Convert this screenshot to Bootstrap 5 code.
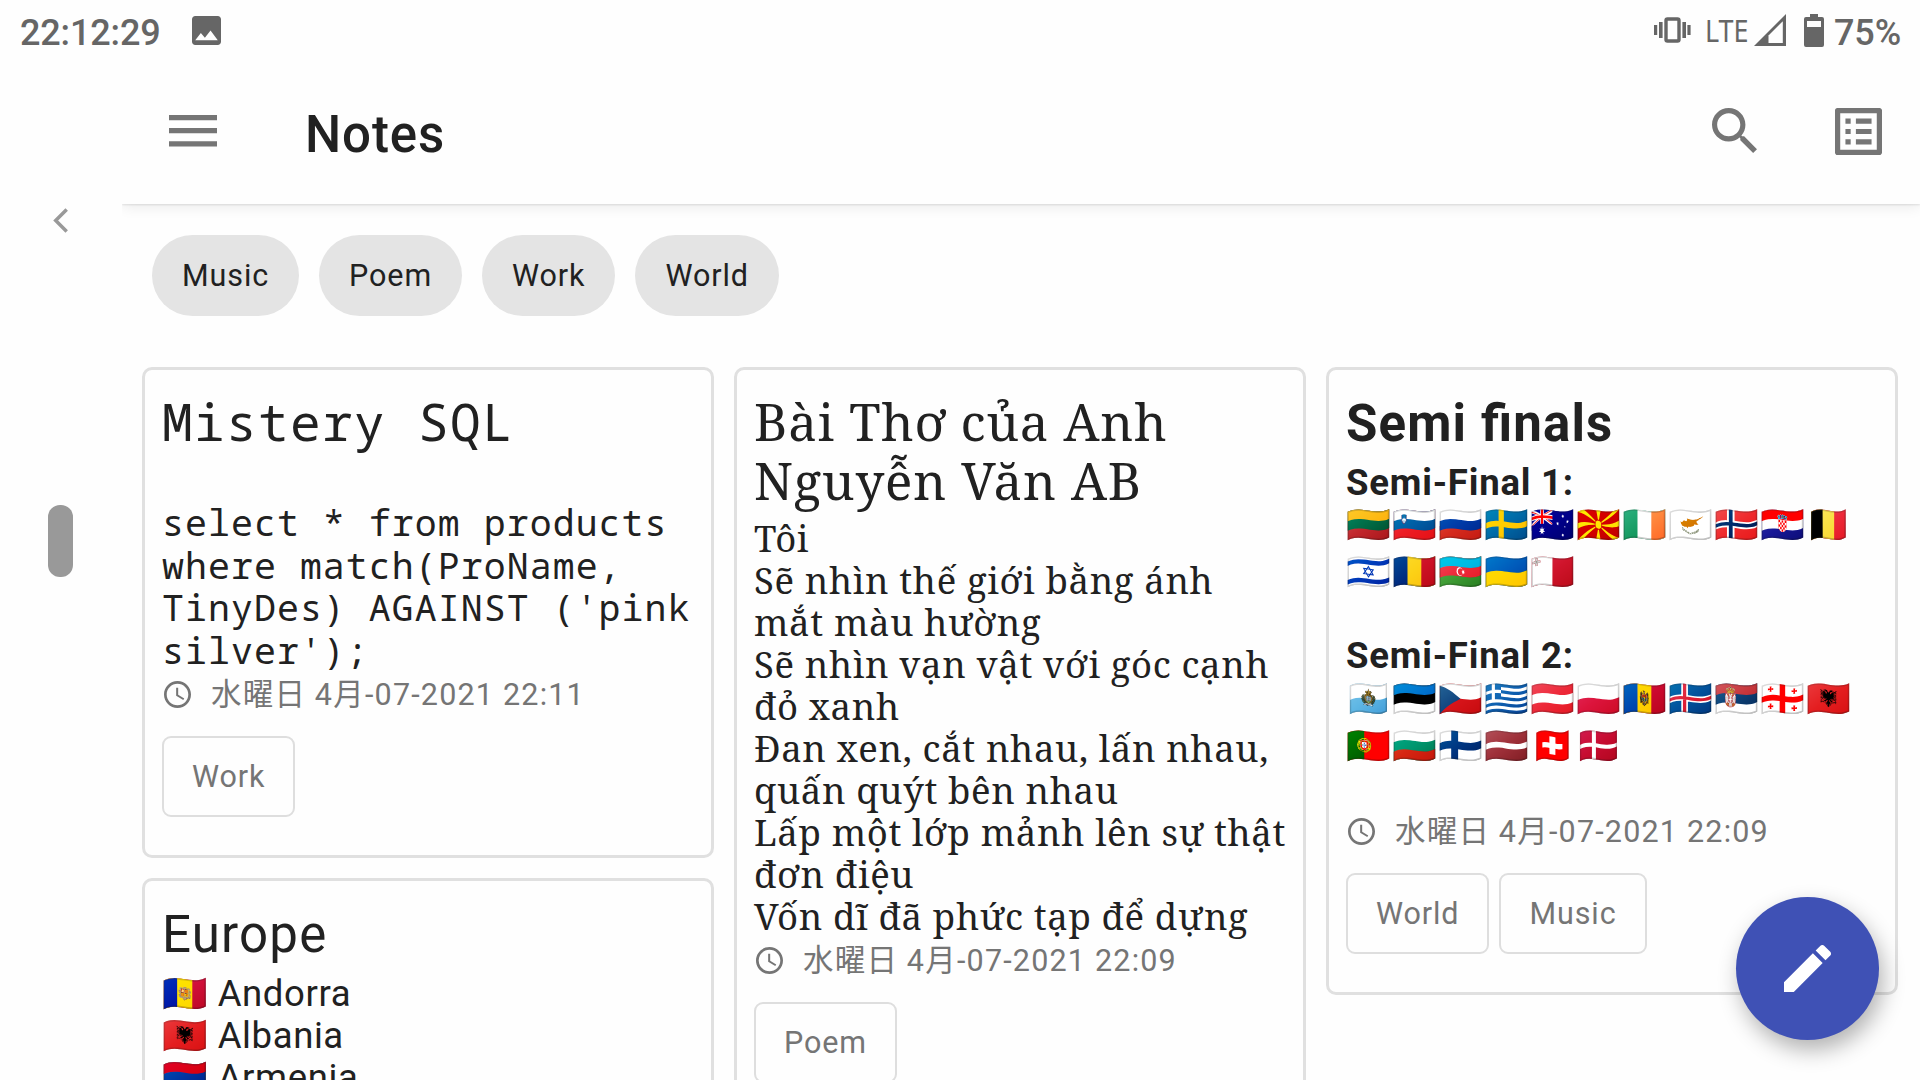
<!DOCTYPE html>
<html lang="en">
<head>
<meta charset="utf-8">
<meta name="viewport" content="width=device-width, initial-scale=1">
<title>Notes</title>
<link rel="stylesheet" href="https://cdn.jsdelivr.net/npm/bootstrap@5.3.0/dist/css/bootstrap.min.css">
<style>
  body { width: 1920px; height: 1080px; overflow: hidden; background: #fefefe; color: #212121; font-family: Roboto, "Noto Sans CJK JP", "Noto Color Emoji", sans-serif; }
  svg { display: block; flex: none; }
  .status-bar { height: 64px; padding: 0 19px 0 20px; color: #666; font-size: 36px; font-weight: 500; line-height: 66px; letter-spacing: -.15px; }
  .status-bar .lte { width: 43px; margin-left: 14px; font-family: "Noto Sans", sans-serif; font-size: 31px; font-weight: 400; letter-spacing: 0; line-height: 60px; transform: scaleX(.87); transform-origin: left; }
  .icon-picture { margin: 16px 0 0 31px; }
  .icon-signal { margin: 14px 0 0 6px; }
  .icon-battery { margin: 14px 10px 0 17px; }
  .side-rail { width: 122px; height: 1016px; padding: 144px 0 0 48px; }
  .rail-thumb { width: 25px; height: 72px; border-radius: 12px; background: #999; margin-top: 272px; }
  .app-bar { height: 140px; padding: 0 38px 0 47px; color: #757575; box-shadow: 0 1px 2px rgba(0,0,0,.1), 0 2px 14px rgba(0,0,0,.09); clip-path: inset(0 0 -24px 0); }
  .app-title { font-size: 51px; font-weight: 500; letter-spacing: .9px; line-height: 60px; margin: 41px 0 0 88px; color: #212121; }
  .icon-menu { margin-top: 51px; }
  .icon-action { margin-top: 44px; }
  .icon-action + .icon-action { margin-left: 78px; }
  .chips { gap: 20px; padding: 31px 0 0 30px; }
  .chip { height: 81px; border-radius: 41px; padding: 0 30px; background: #e4e4e4; font-size: 30.5px; line-height: 81px; letter-spacing: .9px; }
  .board { gap: 20px; padding: 51px 0 0 20px; }
  .board-col { width: 572px; gap: 20px; }
  .note { border: 3px solid #e0e0e0; border-radius: 10px; padding: 24px 17px 38px; background: #fefefe; white-space: nowrap; }
  .note-title { font-size: 51px; line-height: 59px; font-weight: 400; margin: 0 0 8.500px; letter-spacing: 1.2px; }
  .note-body { font-size: 36.5px; line-height: 42px; margin: 0; letter-spacing: .6px; }
  .note-date { margin-top: 3px; font-size: 30.5px; line-height: 42px; letter-spacing: 1.2px; color: #757575; }
  .note-date svg { margin: 7px 20px 0 2px; }
  .note-tags { gap: 10px; margin-top: 20px; }
  .note-tag { height: 81px; border: 2px solid #dedede; border-radius: 9px; padding: 0 28px; color: #757575; font-size: 30.5px; line-height: 77px; letter-spacing: .9px; }
  .mono { font-family: "Noto Sans Mono", monospace; }
  .mono.note-title { margin: -2px 0 50.300px; letter-spacing: 1.4px; }
  .mono.note-body { line-height: 42.4px; letter-spacing: 1.08px; margin-bottom: 3.500px; }
  .poem { font-family: "Noto Serif", serif; }
  .poem.note-title { margin: -2px 0 7px; letter-spacing: .88px; }
  .poem.note-body { letter-spacing: .63px; }
  .flag-rows { font-size: 36px; line-height: 47.3px; letter-spacing: 1.2px; margin: -1.800px 0 39px; }
  .flag-rows + .note-date { margin-top: 41px; }
  .note h3 { font-size: 36.5px; font-weight: 700; line-height: 42px; letter-spacing: .8px; margin: 0; }
  .bold-title { font-weight: 700; letter-spacing: 1.15px; font-feature-settings: "liga" 1; }
  .fab { position: absolute; left: 1736px; top: 897px; width: 143px; height: 143px; background: #3f51b5; box-shadow: 4px 10px 22px rgba(0,0,0,.3); }
</style>
</head>
<body>
<header class="status-bar d-flex align-items-start justify-content-between">
  <div class="d-flex">
    <span>22:12:29</span>
    <svg class="icon-picture" width="29" height="29" viewBox="3 3 18 18" fill="#666"><path d="M21 19V5c0-1.1-.9-2-2-2H5c-1.1 0-2 .9-2 2v14c0 1.1.9 2 2 2h14c1.1 0 2-.9 2-2zM8.500 13.500l2.500 3.010L14.500 12l4.500 6H5z"/></svg>
  </div>
  <div class="d-flex">
    <svg class="mt-3" width="37" height="28" viewBox="0 0 37 28" fill="#666"><path d="M0 9h3.200v10H0zM5 6h3.600v16H5zM28.400 6H32v16h-3.600zM33.400 9h3.200v10h-3.200z"/><rect x="12" y="3" width="13" height="22" rx="1.500" fill="none" stroke="#666" stroke-width="3.400"/></svg>
    <span class="lte">LTE</span>
    <svg class="icon-signal" width="33" height="33" viewBox="0 0 33 33" fill="#666"><path d="M0 32L32 0v32z"/><path d="M14.500 21.500L28.800 7.200v21.800H14.500z" fill="#fefefe"/></svg>
    <svg class="icon-battery" width="20" height="33" viewBox="0 0 20 33" fill="#666"><path d="M6 0h8v3h4a2 2 0 0 1 2 2v26a2 2 0 0 1-2 2H2a2 2 0 0 1-2-2V5a2 2 0 0 1 2-2h4z"/><path d="M3 7h14v6H3z" fill="#fefefe"/></svg>
    <span>75%</span>
  </div>
</header>
<div class="d-flex">
  <aside class="side-rail">
    <svg width="25" height="25" viewBox="0 0 25 25" fill="none" stroke="#999" stroke-width="3.500"><path d="M18.700 1.500L7.700 12.500l11 11"/></svg>
    <div class="rail-thumb"></div>
  </aside>
  <main class="flex-grow-1">
    <nav class="app-bar d-flex align-items-start">
      <svg class="icon-menu" width="48" height="32" viewBox="0 0 48 32" fill="#757575"><path d="M0 0h48v5.200H0zM0 13h48v5.200H0zM0 26.200h48v5.200H0z"/></svg>
      <h1 class="app-title">Notes</h1>
      <svg class="icon-action ms-auto" width="45" height="45" viewBox="3 3 17.500 17.500" fill="#757575"><path d="M15.500 14h-.790l-.280-.270C15.410 12.590 16 11.110 16 9.500 16 5.910 13.090 3 9.500 3S3 5.910 3 9.500 5.910 16 9.500 16c1.610 0 3.090-.590 4.230-1.570l.270.280v.790l5 4.990L20.490 19l-4.990-5zm-6 0C7.010 14 5 11.990 5 9.500S7.010 5 9.500 5 14 7.010 14 9.500 11.990 14 9.500 14z"/></svg>
      <svg class="icon-action" width="47" height="47" viewBox="3 3 18 18" fill="#757575"><path d="M19 5v14H5V5h14m1.100-2H3.900c-.5 0-.9.400-.9.900v16.200c0 .400.400.900.900.900h16.200c.400 0 .900-.5.900-.900V3.900c0-.5-.5-.9-.9-.9zM11 7h6v2h-6V7zm0 4h6v2h-6v-2zm0 4h6v2h-6zM7 7h2v2H7zm0 4h2v2H7zm0 4h2v2H7z"/></svg>
    </nav>
    <div class="chips d-flex">
      <span class="chip">Music</span><span class="chip">Poem</span><span class="chip">Work</span><span class="chip">World</span>
    </div>
    <div class="board d-flex align-items-start">
      <div class="board-col d-flex flex-column">
        <article class="note">
          <h2 class="note-title mono">Mistery SQL</h2>
          <p class="note-body mono">select * from products<br>where match(ProName,<br>TinyDes) AGAINST ('pink<br>silver');</p>
          <div class="note-date d-flex">
            <svg width="27" height="27" viewBox="2 2 20 20" fill="#757575"><path d="M11.990 2C6.470 2 2 6.480 2 12s4.470 10 9.990 10C17.520 22 22 17.520 22 12S17.520 2 11.990 2zM12 20c-4.420 0-8-3.580-8-8s3.580-8 8-8 8 3.580 8 8-3.580 8-8 8zm.5-13H11v6l5.250 3.150.750-1.230-4.500-2.670z"/></svg>
            <span>水曜日 4月-07-2021 22:11</span>
          </div>
          <div class="note-tags d-flex"><span class="note-tag">Work</span></div>
        </article>
        <article class="note">
          <h2 class="note-title">Europe</h2>
          <p class="note-body">🇦🇩 Andorra<br>🇦🇱 Albania<br>🇦🇲 Armenia</p>
        </article>
      </div>
      <div class="board-col d-flex flex-column">
        <article class="note">
          <h2 class="note-title poem">Bài Thơ của Anh<br>Nguyễn Văn AB</h2>
          <p class="note-body poem">Tôi<br>Sẽ nhìn thế giới bằng ánh<br>mắt màu hường<br>Sẽ nhìn vạn vật với góc cạnh<br>đỏ xanh<br>Đan xen, cắt nhau, lấn nhau,<br>quấn quýt bên nhau<br>Lấp một lớp mảnh lên sự thật<br>đơn điệu<br>Vốn dĩ đã phức tạp để dựng</p>
          <div class="note-date d-flex">
            <svg width="27" height="27" viewBox="2 2 20 20" fill="#757575"><path d="M11.990 2C6.470 2 2 6.480 2 12s4.470 10 9.990 10C17.520 22 22 17.520 22 12S17.520 2 11.990 2zM12 20c-4.420 0-8-3.580-8-8s3.580-8 8-8 8 3.580 8 8-3.580 8-8 8zm.5-13H11v6l5.250 3.150.750-1.230-4.500-2.670z"/></svg>
            <span>水曜日 4月-07-2021 22:09</span>
          </div>
          <div class="note-tags d-flex"><span class="note-tag">Poem</span></div>
        </article>
      </div>
      <div class="board-col d-flex flex-column">
        <article class="note">
          <h2 class="note-title bold-title">Semi finals</h2>
          <h3>Semi-Final 1:</h3>
          <div class="flag-rows">🇱🇹🇸🇮🇷🇺🇸🇪🇦🇺🇲🇰🇮🇪🇨🇾🇳🇴🇭🇷🇧🇪<br>🇮🇱🇷🇴🇦🇿🇺🇦🇲🇹</div>
          <h3>Semi-Final 2:</h3>
          <div class="flag-rows">🇸🇲🇪🇪🇨🇿🇬🇷🇦🇹🇵🇱🇲🇩🇮🇸🇷🇸🇬🇪🇦🇱<br>🇵🇹🇧🇬🇫🇮🇱🇻🇨🇭🇩🇰</div>
          <div class="note-date d-flex">
            <svg width="27" height="27" viewBox="2 2 20 20" fill="#757575"><path d="M11.990 2C6.470 2 2 6.480 2 12s4.470 10 9.990 10C17.520 22 22 17.520 22 12S17.520 2 11.990 2zM12 20c-4.420 0-8-3.580-8-8s3.580-8 8-8 8 3.580 8 8-3.580 8-8 8zm.5-13H11v6l5.250 3.150.750-1.230-4.500-2.670z"/></svg>
            <span>水曜日 4月-07-2021 22:09</span>
          </div>
          <div class="note-tags d-flex"><span class="note-tag">World</span><span class="note-tag">Music</span></div>
        </article>
      </div>
    </div>
  </main>
</div>
<button type="button" class="fab btn rounded-circle border-0 p-0 d-flex align-items-center justify-content-center" aria-label="New note">
  <svg width="47" height="47" viewBox="3 3 18 18" fill="#fff"><path d="M3 17.250V21h3.750L17.810 9.940l-3.750-3.750L3 17.250zM20.710 7.040c.390-.390.390-1.020 0-1.410l-2.340-2.340c-.390-.390-1.020-.390-1.410 0l-1.830 1.830 3.750 3.750 1.830-1.830z"/></svg>
</button>
<script src="https://cdn.jsdelivr.net/npm/bootstrap@5.3.0/dist/js/bootstrap.bundle.min.js"></script>
</body>
</html>
